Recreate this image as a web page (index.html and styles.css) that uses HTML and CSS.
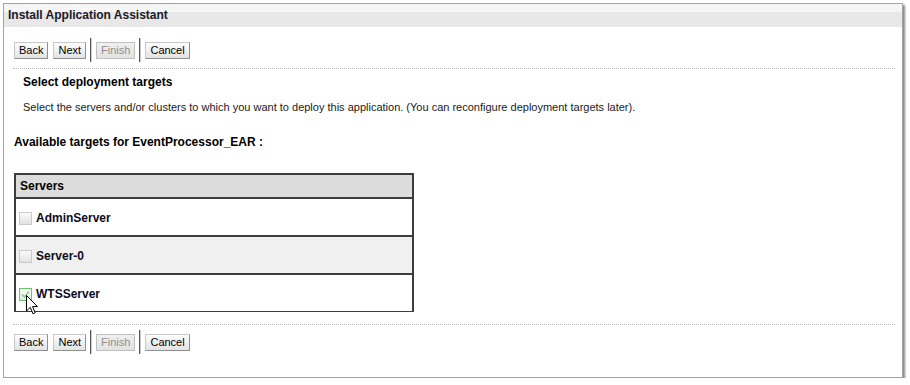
FILE: index.html
```html
<!DOCTYPE html>
<html lang="en">
<head>
  <meta charset="UTF-8">
  <title>Install Application Assistant</title>
  <link rel="stylesheet" href="styles.css">
</head>
<body>
  <div class="panel">
    <div class="titlebar">Install Application Assistant</div>

    <div class="toolbar">
      <button class="btn">Back</button>
      <button class="btn">Next</button>
      <span class="sep"></span>
      <button class="btn" disabled>Finish</button>
      <span class="sep"></span>
      <button class="btn">Cancel</button>
    </div>
    <div class="dots"></div>

    <h3 class="step">Select deployment targets</h3>
    <p class="desc">Select the servers and/or clusters to which you want to deploy this application. (You can reconfigure deployment targets later).</p>

    <h4 class="avail">Available targets for EventProcessor_EAR :</h4>

    <div class="targets">
      <div class="thead">Servers</div>
      <div class="row"><span class="cb"></span>AdminServer</div>
      <div class="row alt"><span class="cb"></span>Server-0</div>
      <div class="row"><span class="cb on"><svg width="11" height="11" viewBox="0 0 11 11"><path d="M2 5.5 L4.5 8 L9 2.5" fill="none" stroke="#9ac89a" stroke-width="1.6"/></svg></span>WTSServer
        <svg class="cursor" width="13" height="20" viewBox="0 0 13 20"><path d="M0.5 0.5 L0.5 16 L4.3 12.4 L7 18.8 L9.2 17.9 L6.6 11.6 L11.5 11.6 Z" fill="#fff" stroke="#000" stroke-width="1"/></svg>
      </div>
    </div>

    <div class="dots bottom"></div>
    <div class="toolbar low">
      <button class="btn">Back</button>
      <button class="btn">Next</button>
      <span class="sep"></span>
      <button class="btn" disabled>Finish</button>
      <span class="sep"></span>
      <button class="btn">Cancel</button>
    </div>
  </div>
</body>
</html>
```

FILE: styles.css
```css
*{box-sizing:border-box;margin:0;padding:0}
body{background:#fff;font-family:"Liberation Sans",Arial,sans-serif;font-size:11px;color:#000}
.panel{margin:3px 0 0 3px;width:900px;height:375px;border:1px solid #a3a3a3;box-shadow:2px 2px 2px #8a8a8a;background:#fff}
.titlebar{height:23px;line-height:23px;padding-left:4px;font-weight:bold;font-size:12px;color:#1a1a2a;background:linear-gradient(#f5f5f5 0,#f5f5f5 8px,#e8e8e8 8px,#e8e8e8 100%)}
.toolbar{display:flex;align-items:center;height:24px;margin:11px 0 0 10px;gap:5px}
.toolbar.low{margin-top:5px}
.sep{width:2px;height:24px;border-left:1px solid #555;border-right:1px solid #ccc;margin:0 -1px}
.btn{height:17px;padding:0 4px;font-family:"Liberation Sans",Arial,sans-serif;font-size:11px;color:#000;border:1px solid #8f8f8f;border-top-color:#c8c8c8;border-left-color:#c8c8c8;background:linear-gradient(#fdfdfd,#e3e3e3);line-height:15px}
.btn:disabled{color:#8e8e8e;border-color:#c0c0c0;background:linear-gradient(#f0f0f0,#e2e2e2)}
.dots{margin:6px 7px 0 9px;border-top:1px dotted #b5b5b5}
.dots.bottom{margin-top:12px}
.step{font-size:12px;line-height:16px;margin:5px 0 0 19px;color:#000}
.desc{line-height:16px;margin:9px 0 0 19px;color:#1a1a1a}
.avail{font-size:12px;line-height:16px;margin:19px 0 0 10px}
.targets{width:400px;margin:23px 0 0 10px;border:2px solid #3d3d3d;border-bottom-width:1px}
.thead{height:22px;line-height:22px;padding-left:4px;background:#dcdcdc;font-weight:bold;font-size:12px}
.row{position:relative;display:flex;align-items:center;gap:4px;height:38px;padding:2px 0 0 3px;border-top:2px solid #3d3d3d;font-weight:bold;font-size:12px;color:#0c0c1c}
.row.alt{background:#f0f0f0}
.cb{display:inline-flex;align-items:center;justify-content:center;width:13px;height:13px;border:1px solid #cacaca;background:linear-gradient(#fbfbfb,#e2e2e2)}
.cb.on{border-color:#6fc26f;background:linear-gradient(#f4fbf4,#dceedc)}
.cursor{position:absolute;left:10px;top:20px}
```
